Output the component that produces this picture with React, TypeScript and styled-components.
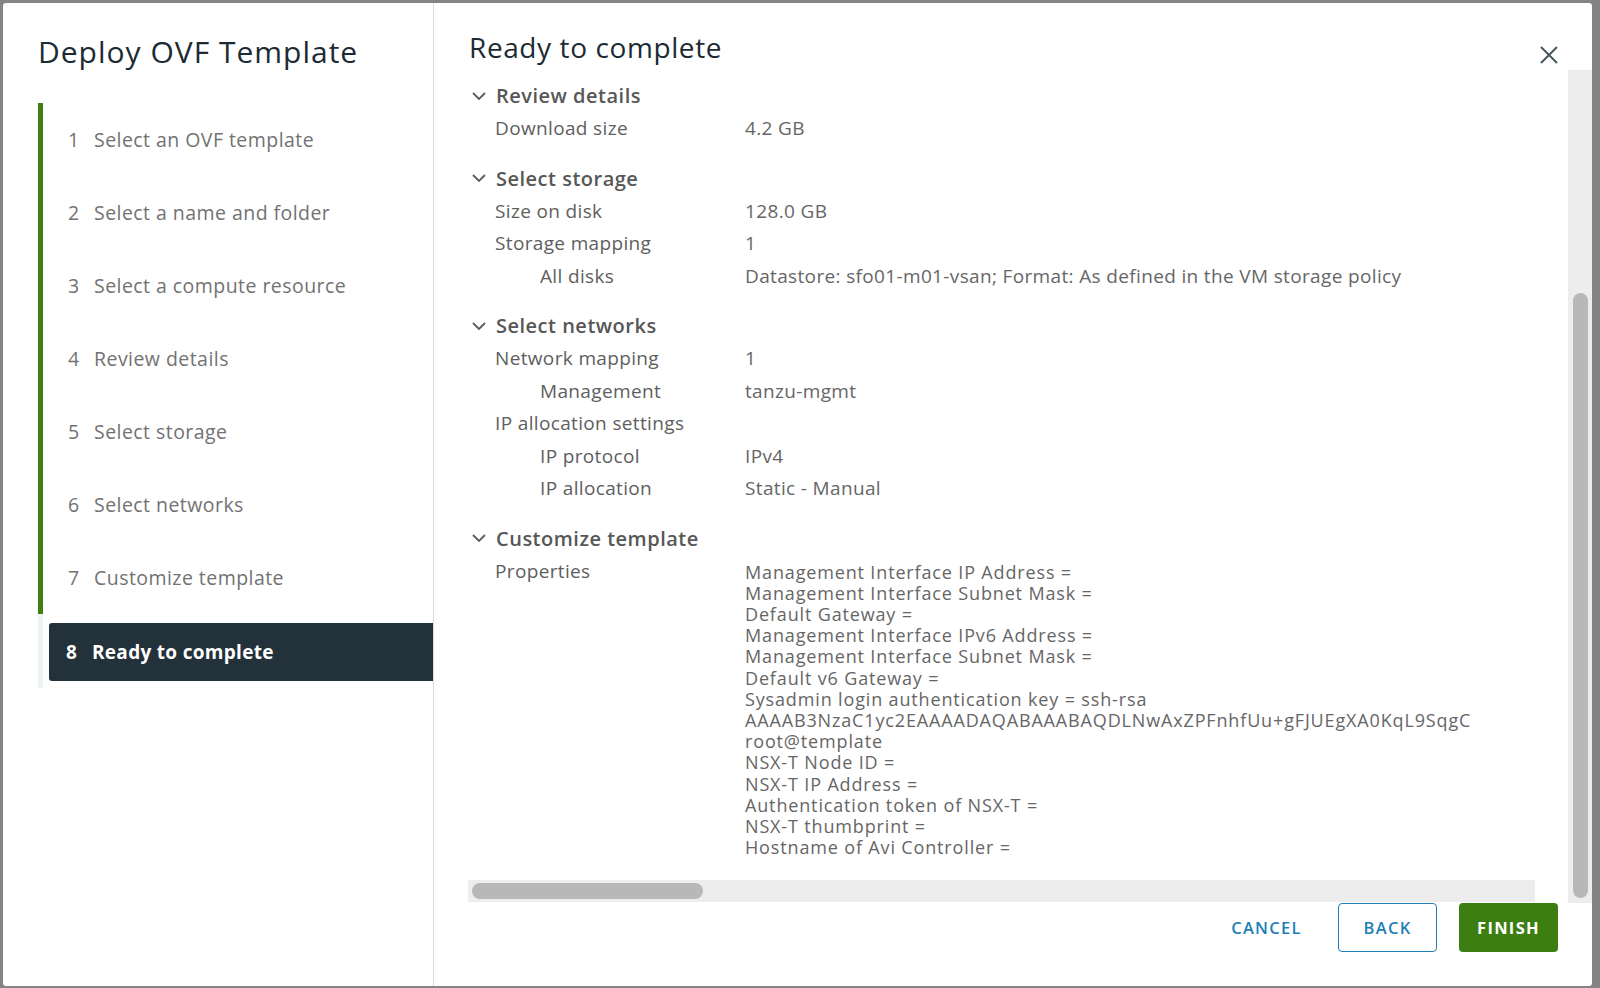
import React from "react";
import styled, { createGlobalStyle } from "styled-components";

const GlobalStyle = createGlobalStyle`
  html, body {
    margin: 0;
    padding: 0;
    background: #848484;
    font-family: "Open Sans", "Liberation Sans", sans-serif;
  }
`;

const pasos = [
  "Select an OVF template",
  "Select a name and folder",
  "Select a compute resource",
  "Review details",
  "Select storage",
  "Select networks",
  "Customize template",
];

type Fila = { label: string; value?: string; nested?: boolean };
type Seccion = { title: string; rows: Fila[] };

const secciones: Seccion[] = [
  { title: "Review details", rows: [{ label: "Download size", value: "4.2 GB" }] },
  {
    title: "Select storage",
    rows: [
      { label: "Size on disk", value: "128.0 GB" },
      { label: "Storage mapping", value: "1" },
      { label: "All disks", value: "Datastore: sfo01-m01-vsan; Format: As defined in the VM storage policy", nested: true },
    ],
  },
  {
    title: "Select networks",
    rows: [
      { label: "Network mapping", value: "1" },
      { label: "Management", value: "tanzu-mgmt", nested: true },
      { label: "IP allocation settings" },
      { label: "IP protocol", value: "IPv4", nested: true },
      { label: "IP allocation", value: "Static - Manual", nested: true },
    ],
  },
];

// la clave ssh va cortada, como en la captura
const propiedades = [
  "Management Interface IP Address =",
  "Management Interface Subnet Mask =",
  "Default Gateway =",
  "Management Interface IPv6 Address =",
  "Management Interface Subnet Mask =",
  "Default v6 Gateway =",
  "Sysadmin login authentication key = ssh-rsa",
  "AAAAB3NzaC1yc2EAAAADAQABAAABAQDLNwAxZPFnhfUu+gFJUEgXA0KqL9SqgC",
  "root@template",
  "NSX-T Node ID =",
  "NSX-T IP Address =",
  "Authentication token of NSX-T =",
  "NSX-T thumbprint =",
  "Hostname of Avi Controller =",
];

const Chevron = () => (
  <svg width="16" height="10" viewBox="0 0 16 10">
    <path d="M2 2 L8 8 L14 2" fill="none" stroke="#5b5b5b" strokeWidth="1.8" />
  </svg>
);

const App = () => {
  return (
    <>
      <GlobalStyle />
      <Pagina>
        <Modal>
          <Sidebar>
            <SidebarTitle>Deploy OVF Template</SidebarTitle>
            <Pasos>
              {pasos.map((p, i) => (
                <Paso key={p}>
                  <PasoNum>{i + 1}</PasoNum>
                  {p}
                </Paso>
              ))}
              <PasoActivoSlot>
                <PasoActivo>
                  <PasoNum>8</PasoNum>
                  Ready to complete
                </PasoActivo>
              </PasoActivoSlot>
            </Pasos>
          </Sidebar>

          <Main>
            <MainHeader>
              <MainTitle>Ready to complete</MainTitle>
              <CloseBtn aria-label="close">
                <svg width="22" height="22" viewBox="0 0 22 22">
                  <path d="M3 3 L19 19 M19 3 L3 19" stroke="#45535c" strokeWidth="1.9" />
                </svg>
              </CloseBtn>
            </MainHeader>

            <BodyRow>
              <BodyScroll>
                <Contenido>
                  {secciones.map((s, si) => (
                    <Section key={s.title} first={si === 0}>
                      <SectionHeader>
                        <Chevron />
                        {s.title}
                      </SectionHeader>
                      {s.rows.map((r) => (
                        <Row key={r.label}>
                          <Label nested={!!r.nested}>{r.label}</Label>
                          {r.value && <Value>{r.value}</Value>}
                        </Row>
                      ))}
                    </Section>
                  ))}
                  <Section first={false}>
                    <SectionHeader>
                      <Chevron />
                      Customize template
                    </SectionHeader>
                    <PropRow>
                      <PropLabel nested={false}>Properties</PropLabel>
                      <PropList>
                        {propiedades.map((p, i) => (
                          <PropLine key={i}>{p}</PropLine>
                        ))}
                      </PropList>
                    </PropRow>
                  </Section>
                </Contenido>
                <HScroll>
                  <HThumb />
                </HScroll>
              </BodyScroll>
              <VScroll>
                <VThumb />
              </VScroll>
            </BodyRow>

            <Footer>
              <FlatBtn>CANCEL</FlatBtn>
              <OutlineBtn>BACK</OutlineBtn>
              <PrimaryBtn>FINISH</PrimaryBtn>
            </Footer>
          </Main>
        </Modal>
      </Pagina>
    </>
  );
};

const Pagina = styled.div`
  width: 1600px;
  height: 988px;
  box-sizing: border-box;
  padding: 3px 8px 2px 3px;
  display: flex;
`;

const Modal = styled.div`
  flex: 1;
  display: flex;
  background: #fff;
  border-radius: 3px;
  overflow: hidden;
`;

const Sidebar = styled.div`
  width: 431px;
  flex-shrink: 0;
  border-right: 1px solid #dcdcdc;
  padding: 0 0 0 35px;
  box-sizing: border-box;
`;

const SidebarTitle = styled.h1`
  margin: 30px 0 0;
  font-size: 30px;
  line-height: 38px;
  font-weight: 400;
  color: #1c2b33;
  letter-spacing: 1px;
  white-space: nowrap;
`;

const Pasos = styled.div`
  margin-top: 32px;
  display: flex;
  flex-direction: column;
`;

const Paso = styled.div`
  height: 73px;
  display: flex;
  align-items: center;
  border-left: 5px solid #3f8010;
  padding-left: 25px;
  font-size: 19.5px;
  letter-spacing: 0.45px;
  color: #727272;
  white-space: nowrap;
`;

const PasoNum = styled.span`
  width: 26px;
  flex-shrink: 0;
`;

const PasoActivoSlot = styled.div`
  height: 74px;
  border-left: 5px solid #eef3f6;
  padding: 9px 0 7px 6px;
  box-sizing: border-box;
  display: flex;
`;

const PasoActivo = styled.div`
  flex: 1;
  display: flex;
  align-items: center;
  background: #22313a;
  border-radius: 3px 0 0 3px;
  padding-left: 17px;
  font-size: 19px;
  letter-spacing: 0.3px;
  font-weight: 700;
  color: #fff;
  white-space: nowrap;
`;

const Main = styled.div`
  flex: 1;
  display: flex;
  flex-direction: column;
  min-width: 0;
`;

const MainHeader = styled.div`
  height: 67px;
  display: flex;
  justify-content: space-between;
  align-items: flex-start;
  padding: 0 30px 0 35px;
  flex-shrink: 0;
`;

const MainTitle = styled.h2`
  margin: 27px 0 0;
  font-size: 28px;
  line-height: 34px;
  font-weight: 400;
  letter-spacing: 0.6px;
  color: #1c2b33;
`;

const CloseBtn = styled.button`
  margin-top: 39px;
  border: none;
  background: none;
  padding: 0;
  cursor: pointer;
  width: 26px;
  height: 26px;
  display: flex;
  align-items: center;
  justify-content: center;
`;

const BodyRow = styled.div`
  flex: 1;
  display: flex;
  min-height: 0;
`;

const BodyScroll = styled.div`
  flex: 1;
  display: flex;
  flex-direction: column;
  padding: 0 33px 1px 34px;
  min-width: 0;
`;

const Contenido = styled.div`
  flex: 1;
  overflow: hidden;
  padding-top: 9px;
`;

type SectionProps = { first: boolean };

const Section = styled.div<SectionProps>`
  margin-top: ${(p) => (p.first ? "0" : "17px")};
`;

const SectionHeader = styled.div`
  height: 33px;
  display: flex;
  align-items: center;
  gap: 9px;
  padding-left: 3px;
  font-size: 20px;
  letter-spacing: 0.5px;
  font-weight: 600;
  color: #575757;
  white-space: nowrap;
`;

const Row = styled.div`
  height: 32.5px;
  display: flex;
  align-items: center;
  font-size: 19px;
  letter-spacing: 0.35px;
  color: #5e5e5e;
  white-space: nowrap;
`;

type LabelProps = { nested: boolean };

const Label = styled.div<LabelProps>`
  width: 277px;
  flex-shrink: 0;
  box-sizing: border-box;
  padding-left: ${(p) => (p.nested ? "72px" : "27px")};
`;

const Value = styled.div`
  color: #666;
`;

const PropRow = styled(Row)`
  height: auto;
  align-items: flex-start;
  padding-top: 7px;
`;

const PropLabel = styled(Label)`
  line-height: 21.2px;
  margin-top: -1px;
`;

const PropList = styled.div`
  display: flex;
  flex-direction: column;
  font-size: 18px;
  letter-spacing: 0.85px;
  line-height: 21.2px;
  color: #666;
  min-width: 0;
`;

const PropLine = styled.div`
  white-space: nowrap;
`;

const HScroll = styled.div`
  height: 22px;
  flex-shrink: 0;
  background: #ededed;
  display: flex;
  align-items: center;
  padding-left: 4px;
`;

const HThumb = styled.div`
  width: 231px;
  height: 16px;
  border-radius: 8px;
  background: #b8b8b8;
`;

const VScroll = styled.div`
  width: 24px;
  flex-shrink: 0;
  background: #ededed;
  display: flex;
  flex-direction: column;
  align-items: center;
`;

const VThumb = styled.div`
  margin-top: 223px;
  width: 15px;
  height: 605px;
  border-radius: 8px;
  background: #b8b8b8;
`;

const Footer = styled.div`
  height: 83px;
  flex-shrink: 0;
  display: flex;
  justify-content: flex-end;
  align-items: flex-start;
  gap: 22px;
  padding-right: 34px;
`;

const BaseBtn = styled.button`
  width: 99px;
  height: 49px;
  box-sizing: border-box;
  border-radius: 4px;
  font-family: "Open Sans", "Liberation Sans", sans-serif;
  font-size: 16.5px;
  font-weight: 600;
  letter-spacing: 1.3px;
  cursor: pointer;
`;

const FlatBtn = styled(BaseBtn)`
  background: none;
  border: none;
  color: #1e7fb5;
`;

const OutlineBtn = styled(BaseBtn)`
  background: #fff;
  border: 1px solid #1e7fb5;
  color: #1e7fb5;
`;

const PrimaryBtn = styled(BaseBtn)`
  background: #3d7e12;
  border: none;
  color: #fff;
  font-weight: 700;
`;

export default App;
